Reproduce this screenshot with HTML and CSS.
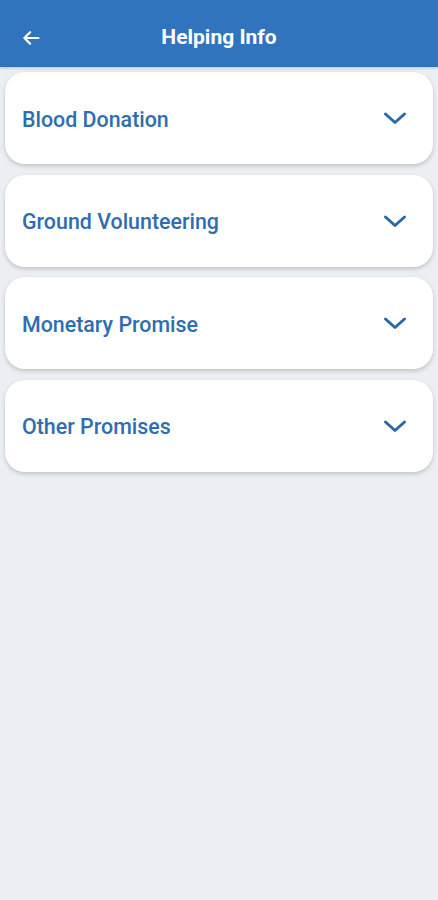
FILE: index.html
```html
<!DOCTYPE html>
<html lang="en">
<head>
  <meta charset="UTF-8" />
  <title>Helping Info</title>
  <link rel="stylesheet" href="styles.css">
</head>
<body>
<div class="topBar">
  <button class="backBtn" aria-label="Back">
    <svg width="20" height="20" viewBox="0 0 24 24"><path d="M21 12H4M11 5l-7 7 7 7" fill="none" stroke="#fff" stroke-width="2.6" stroke-linecap="round" stroke-linejoin="round"/></svg>
  </button>
  <h3>Helping Info</h3>
</div>
<div class="pageContent">
  <div class="card">
    <span>Blood Donation</span>
    <svg class="chevron" width="24" height="24" viewBox="0 0 24 24"><path d="M2.5 7l9.5 8.5 9.5-8.5" fill="none" stroke="currentColor" stroke-width="3" stroke-linecap="round" stroke-linejoin="round"/></svg>
  </div>
  <div class="card">
    <span>Ground Volunteering</span>
    <svg class="chevron" width="24" height="24" viewBox="0 0 24 24"><path d="M2.5 7l9.5 8.5 9.5-8.5" fill="none" stroke="currentColor" stroke-width="3" stroke-linecap="round" stroke-linejoin="round"/></svg>
  </div>
  <div class="card">
    <span>Monetary Promise</span>
    <svg class="chevron" width="24" height="24" viewBox="0 0 24 24"><path d="M2.5 7l9.5 8.5 9.5-8.5" fill="none" stroke="currentColor" stroke-width="3" stroke-linecap="round" stroke-linejoin="round"/></svg>
  </div>
  <div class="card">
    <span>Other Promises</span>
    <svg class="chevron" width="24" height="24" viewBox="0 0 24 24"><path d="M2.5 7l9.5 8.5 9.5-8.5" fill="none" stroke="currentColor" stroke-width="3" stroke-linecap="round" stroke-linejoin="round"/></svg>
  </div>
</div>
</body>
</html>
```
FILE: styles.css
```css
* { margin: 0; padding: 0; box-sizing: border-box; }
html, body {
  height: 100%;
  font-family: Roboto, "Noto Sans", sans-serif;
  background-color: #ebeef2;
}
.topBar {
  position: relative;
  display: flex;
  align-items: center;
  justify-content: center;
  height: 67px;
  padding-top: 7px;
  background-color: #3174be;
  box-shadow: 0 1px 3px rgba(0, 0, 0, 0.2);
}
.topBar .backBtn {
  position: absolute;
  left: 21px;
  top: 28px;
  background: none;
  border: none;
  display: flex;
}
.topBar h3 {
  font-size: 21px;
  font-weight: 700;
  color: #fff;
}
.pageContent {
  display: flex;
  flex-direction: column;
  gap: 10.5px;
  padding: 5px 5px;
}
.card {
  display: flex;
  align-items: center;
  justify-content: space-between;
  height: 92px;
  padding: 2px 26px 0 17px;
  background-color: #fff;
  border-radius: 20px;
  box-shadow: 0 2px 4px rgba(0, 0, 0, 0.18);
  color: #2f6db1;
}
.card span {
  font-size: 21.4px;
  font-weight: 500;
}
.chevron {
  color: #2a68a8;
}
```
